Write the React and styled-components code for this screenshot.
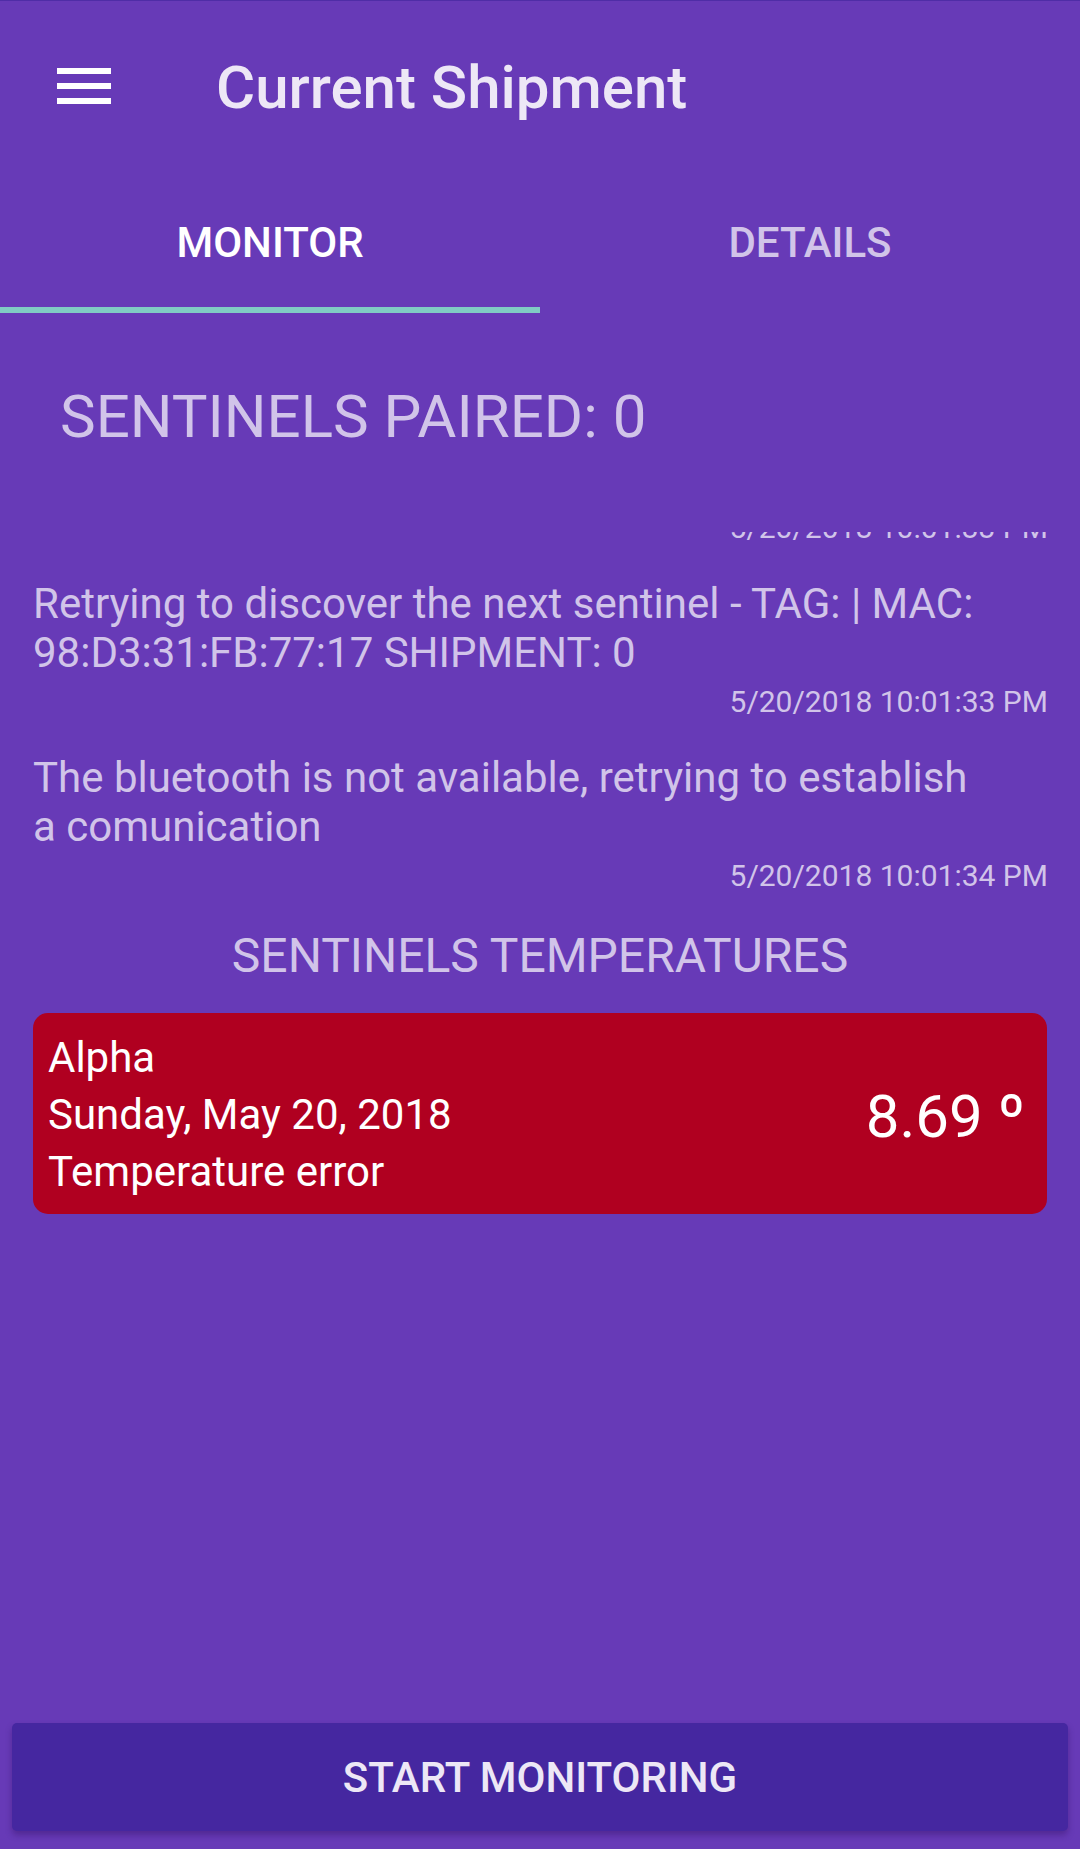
import React from "react";
import styled, { createGlobalStyle } from "styled-components";

const GlobalStyle = createGlobalStyle`
  html, body {
    margin: 0;
    padding: 0;
    background: #673ab7;
  }
  body {
    font-family: Roboto, "Noto Sans", "Liberation Sans", sans-serif;
  }
  * { box-sizing: border-box; }
`;

const Screen = styled.div`
  width: 1080px;
  min-height: 1849px;
  background: #673ab7;
  display: flex;
  flex-direction: column;
`;

const AppBar = styled.header`
  height: 168px;
  border-top: 1px solid #4f2da6;
  display: flex;
  align-items: center;
  padding-left: 57px;
`;

const MenuButton = styled.div`
  width: 54px;
  height: 36px;
  display: flex;
  margin-top: 2px;
`;

const Title = styled.h1`
  margin: 7px 0 0 105px;
  font-size: 60px;
  line-height: 70px;
  font-weight: 500;
  color: #ede7f6;
`;

const TabBar = styled.nav`
  height: 145px;
  display: flex;
`;

const Tab = styled.div`
  flex: 1;
  display: flex;
  align-items: center;
  justify-content: center;
  padding-top: 9px;
  font-size: 42px;
  line-height: 49px;
  font-weight: 500;
  color: ${(p) => (p.$active ? "#ffffff" : "#d1c4e9")};
  border-bottom: 6px solid ${(p) => (p.$active ? "#80cbc4" : "transparent")};
`;

const PairedHeader = styled.h2`
  margin: 69px 0 0;
  padding-left: 60px;
  font-size: 60px;
  line-height: 70px;
  font-weight: 400;
  color: #d1c4e9;
`;

const LogViewport = styled.div`
  margin-top: 80px;
  height: 361px;
  overflow: hidden;
  display: flex;
  flex-direction: column;
  justify-content: flex-end;
  gap: 34px;
`;

const LogEntry = styled.div`
  flex-shrink: 0;
  display: flex;
  flex-direction: column;
  padding: 0 32px 0 33px;
`;

const LogMessage = styled.div`
  margin-right: 60px;
  font-size: 42px;
  line-height: 49px;
  color: #d1c4e9;
`;

const LogTime = styled.div`
  margin-top: 7px;
  text-align: right;
  font-size: 30px;
  line-height: 35px;
  color: #d1c4e9;
`;

const SectionTitle = styled.h3`
  margin: 35px 0 0;
  text-align: center;
  font-size: 48px;
  line-height: 56px;
  font-weight: 400;
  color: #d1c4e9;
`;

const TempCard = styled.div`
  margin: 29px 33px 0;
  height: 201px;
  background: #b00020;
  border-radius: 15px;
  padding: 16px 22px 14px 15px;
  display: flex;
  align-items: center;
  justify-content: space-between;
  color: #ffffff;
`;

const CardInfo = styled.div`
  display: flex;
  flex-direction: column;
  align-self: flex-start;
  font-size: 42px;
  line-height: 57px;
`;

const TempValue = styled.div`
  font-size: 60px;
  line-height: 70px;
  margin-top: 4px;
`;

const Spacer = styled.div`
  flex: 1;
`;

const ActionButton = styled.button`
  margin: 0 12px 18px;
  height: 108px;
  border: none;
  border-radius: 5px;
  background: #4527a0;
  box-shadow: 0 4px 6px rgba(40, 10, 80, 0.35);
  color: #ede7f6;
  font-family: Roboto, "Noto Sans", sans-serif;
  font-size: 42px;
  font-weight: 500;
  line-height: 49px;
  padding: 0;
`;

const logs = [
  {
    text: "The bluetooth is not available, retrying to establish a comunication",
    time: "5/20/2018 10:01:33 PM",
  },
  {
    text: "Retrying to discover the next sentinel - TAG: | MAC: 98:D3:31:FB:77:17 SHIPMENT: 0",
    time: "5/20/2018 10:01:33 PM",
  },
  {
    text: "The bluetooth is not available, retrying to establish a comunication",
    time: "5/20/2018 10:01:34 PM",
  },
];

export default function App() {
  return (
    <Screen>
      <GlobalStyle />
      <AppBar>
        <MenuButton>
          <svg width="54" height="36" viewBox="0 0 54 36">
            <rect x="0" y="0" width="54" height="6" fill="#ffffff" />
            <rect x="0" y="15" width="54" height="6" fill="#ffffff" />
            <rect x="0" y="30" width="54" height="6" fill="#ffffff" />
          </svg>
        </MenuButton>
        <Title>Current Shipment</Title>
      </AppBar>
      <TabBar>
        <Tab $active>MONITOR</Tab>
        <Tab>DETAILS</Tab>
      </TabBar>
      <PairedHeader>SENTINELS PAIRED: 0</PairedHeader>
      <LogViewport>
        {logs.map((l, i) => (
          <LogEntry key={i}>
            <LogMessage>{l.text}</LogMessage>
            <LogTime>{l.time}</LogTime>
          </LogEntry>
        ))}
      </LogViewport>
      <SectionTitle>SENTINELS TEMPERATURES</SectionTitle>
      <TempCard>
        <CardInfo>
          <span>Alpha</span>
          <span>Sunday, May 20, 2018</span>
          <span>Temperature error</span>
        </CardInfo>
        <TempValue>8.69 º</TempValue>
      </TempCard>
      <Spacer />
      <ActionButton>START MONITORING</ActionButton>
    </Screen>
  );
}
